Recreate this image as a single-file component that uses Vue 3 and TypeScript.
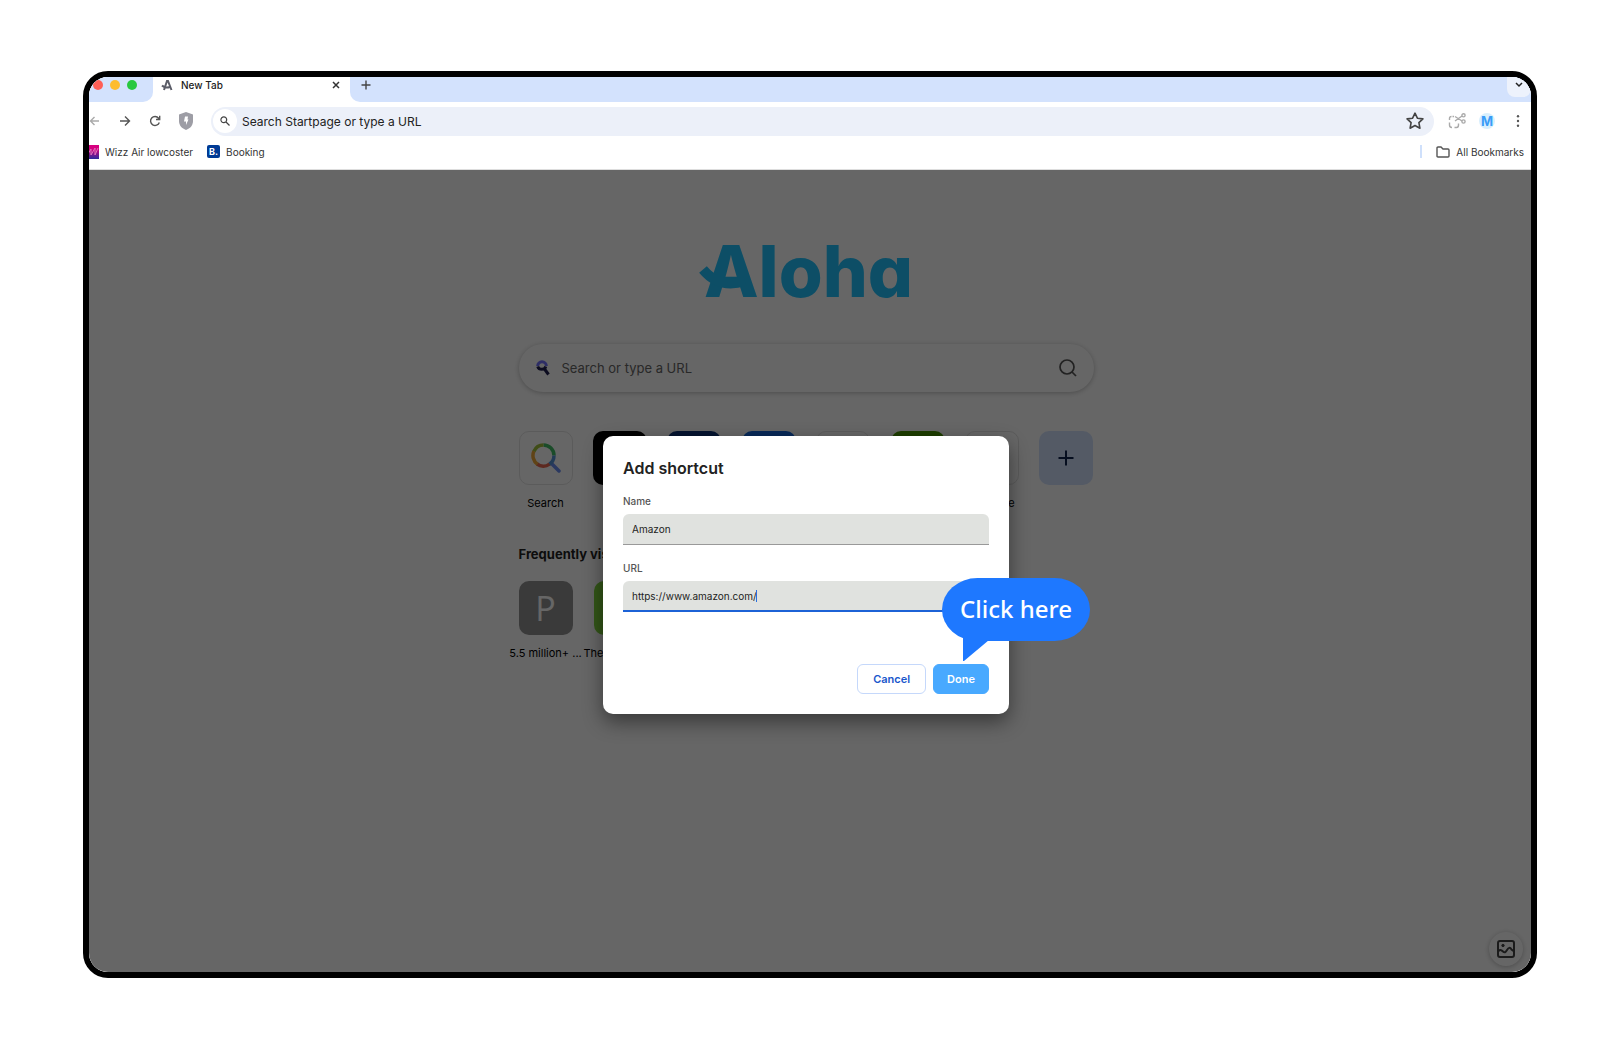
<script setup lang="ts">
import { ref } from 'vue'

interface Tile {
  label: string
  kind: string
}

const name = ref<string>('Amazon')
const url = ref<string>('https://www.amazon.com/')
const omnibox = ref<string>('')
const query = ref<string>('')

const shortcuts: Tile[] = [
  { label: 'Search', kind: 'search' },
  { label: '', kind: 'black' },
  { label: '', kind: 'navy' },
  { label: '', kind: 'blue' },
  { label: '', kind: 'plain' },
  { label: '', kind: 'green' },
  { label: 'YouTube', kind: 'video' },
  { label: '', kind: 'add' },
]
</script>

<template>
  <div class="stage">
    <div class="frame">
      <div class="screen">
        <header>
          <div class="tabstrip">
            <div class="lights"><i class="red"></i><i class="amber"></i><i class="lime"></i></div>
            <div class="tab">
              <svg width="12" height="12" viewBox="0 0 12 12" fill="none" stroke="#5b5d68" stroke-width="2">
                <path d="M3 11 6 2h1l3.500 9M1 6.500c2 2 5 2.500 8 1.500" />
              </svg>
              <span class="tab-title">New Tab</span>
              <button class="plain-btn" aria-label="Close tab">
                <svg width="8" height="8" viewBox="0 0 8 8" stroke="#333" stroke-width="1.500"><path d="M1 1l6 6M7 1 1 7" /></svg>
              </button>
            </div>
            <div class="strip-rest">
              <button class="plain-btn" aria-label="New tab">
                <svg width="10" height="10" viewBox="0 0 10 10" stroke="#444" stroke-width="1.400"><path d="M5 .5v9M.5 5h9" /></svg>
              </button>
              <button class="plain-btn tab-search" aria-label="Search tabs">
                <svg width="8" height="6" viewBox="0 0 8 6" fill="none" stroke="#222" stroke-width="1.500"><path d="M1 1l3 3 3-3" /></svg>
              </button>
            </div>
          </div>

          <div class="toolbar">
            <div class="nav">
              <button class="plain-btn" aria-label="Back">
                <svg width="12" height="12" viewBox="0 0 12 12" fill="none" stroke="#aaa" stroke-width="1.400"><path d="M10 6H1.500M5.500 2 1.500 6 5.500 10" /></svg>
              </button>
              <button class="plain-btn" aria-label="Forward">
                <svg width="12" height="12" viewBox="0 0 12 12" fill="none" stroke="#555" stroke-width="1.400"><path d="M1 6h9M6 1.500 10.500 6 6 10.500" /></svg>
              </button>
              <button class="plain-btn" aria-label="Reload">
                <svg width="12" height="12" viewBox="0 0 12 12" fill="none" stroke="#555" stroke-width="1.400"><path d="M10.300 7.500A4.500 4.500 0 1 1 9.600 3.200L10.500 4.300M10.700 .8v3.700H7" /></svg>
              </button>
              <button class="plain-btn" aria-label="Shield">
                <svg width="14" height="18" viewBox="0 0 14 18"><path d="M7 0 14 2.500V9c0 4.500-3 7.500-7 9-4-1.500-7-4.500-7-9V2.500z" fill="#9d9da5" /><path d="M6 4.500h3L8.500 7.500H9.500L7 13V9.500H5z" fill="#fff" /></svg>
              </button>
            </div>
            <div class="omnibox">
              <span class="omni-icon">
                <svg width="10" height="10" viewBox="0 0 10 10" fill="none" stroke="#444" stroke-width="1.200"><circle cx="3.800" cy="3.800" r="2.900" /><path d="M6 6l3.500 3.500" /></svg>
              </span>
              <input v-model="omnibox" type="text" placeholder="Search Startpage or type a URL" aria-label="Address" />
              <button class="plain-btn" aria-label="Bookmark this page">
                <svg width="18" height="18" viewBox="0 0 18 18" fill="none" stroke="#444" stroke-width="1.600" stroke-linejoin="round"><path d="M9 1.200l2.400 5 5.500.7-4 3.800 1 5.500L9 13.500l-4.900 2.700 1-5.500-4-3.800 5.500-.7z" /></svg>
              </button>
            </div>
            <div class="actions">
              <button class="plain-btn" aria-label="Capture">
                <svg width="18" height="16" viewBox="0 0 18 16" fill="none" stroke="#aaa" stroke-width="1.400"><path d="M6 3.500H4.500M3.500 3.500Q1.500 3.500 1.500 5.500V7M1.500 9.500V12Q1.500 14.500 4 14.500M6.500 14.500H8.500Q10.500 14.500 10.500 12V10.500M7 3.500l7 4.500M7 8l7-5" /><circle cx="15.500" cy="2.300" r="1.600" /><circle cx="15.500" cy="8.500" r="1.600" /></svg>
              </button>
              <button class="plain-btn avatar">M</button>
              <button class="plain-btn" aria-label="Menu">
                <svg width="4" height="14" viewBox="0 0 4 14" fill="#555"><circle cx="2" cy="2.300" r="1.200" /><circle cx="2" cy="7" r="1.200" /><circle cx="2" cy="11.700" r="1.200" /></svg>
              </button>
            </div>
          </div>

          <nav class="bookmarks">
            <a href="#">
              <svg width="14" height="14" viewBox="0 0 14 14">
                <defs><linearGradient id="wizz" x1="0" y1="0" x2="0" y2="1"><stop offset=".3" stop-color="#d6007f" /><stop offset="1" stop-color="#2a2a9c" /></linearGradient></defs>
                <rect width="14" height="14" fill="url(#wizz)" /><path d="M3 9 6 4v6l4-7v7l3-7" fill="none" stroke="#e070b8" />
              </svg>
              Wizz Air lowcoster
            </a>
            <a href="#"><span class="booking-icon">B.</span>Booking</a>
            <span class="bar"></span>
            <a href="#">
              <svg width="14" height="12" viewBox="0 0 14 12" fill="none" stroke="#555" stroke-width="1.400"><path d="M1 10V2q0-1 1-1h3l2 2h5q1 0 1 1v6q0 1-1 1H2q-1 0-1-1z" /></svg>
              All Bookmarks
            </a>
          </nav>
        </header>

        <main>
          <div class="content">
            <h1 class="logo">
              <svg class="swash" width="60" height="30" viewBox="0 0 60 30" fill="none" stroke="#21c4ff" stroke-width="10"><path d="M4 4.500C16 19 30 21 46 16" /></svg>
              Aloha
            </h1>

            <div class="searchbox">
              <svg width="14" height="16" viewBox="0 0 14 16" fill="none" stroke-width="3"><path d="M1.700 6.500a4.300 4.300 0 0 0 8.100 0" stroke="#202050" /><path d="M1.700 6a4.300 4.300 0 0 1 8.600 0" stroke="#7474ff" /><path d="M8.500 9l4 5.500" stroke="#202050" /></svg>
              <input v-model="query" type="text" placeholder="Search or type a URL" aria-label="Search" />
              <button class="plain-btn" aria-label="Search">
                <svg width="18" height="18" viewBox="0 0 18 18" fill="none" stroke="#555" stroke-width="1.700"><circle cx="8" cy="8" r="7" /><path d="M13 13l4 4" /></svg>
              </button>
            </div>

            <ul class="tiles">
              <li v-for="tile in shortcuts" :key="tile.kind">
                <span class="tile" :class="tile.kind">
                  <svg v-if="tile.kind === 'search'" width="30" height="30" viewBox="0 0 30 30" fill="none" stroke-width="3.500">
                    <path d="M20 20l8 8" stroke="#6a8cf0" stroke-linecap="round" />
                    <path d="M12.500 2A10.500 10.500 0 0 1 23 12.500" stroke="#43bd66" />
                    <path d="M23 12.500A10.500 10.500 0 0 1 18 21.500" stroke="#5595d8" />
                    <path d="M18.500 21.200A10.500 10.500 0 0 1 6 21" stroke="#e86850" />
                    <path d="M6.500 21.200A10.500 10.500 0 0 1 3 8" stroke="#f0a838" />
                    <path d="M3 8.200A10.500 10.500 0 0 1 12.500 2" stroke="#a0c03a" />
                  </svg>
                  <svg v-else-if="tile.kind === 'add'" width="16" height="16" viewBox="0 0 16 16" stroke="#10234f" stroke-width="2"><path d="M8 .5v15M.5 8h15" /></svg>
                  <svg v-else-if="tile.kind === 'video'" width="34" height="24" viewBox="0 0 34 24"><rect width="34" height="24" rx="6" fill="#f55" /></svg>
                </span>
                <span class="label">{{ tile.label }}</span>
              </li>
            </ul>

            <h2>Frequently visited</h2>
            <ul class="tiles visited">
              <li><span class="tile letter">P</span><span class="label">5.5 million+ ...</span></li>
              <li><span class="tile lime-tile"></span><span class="label start">The</span></li>
            </ul>
          </div>

          <button class="plain-btn customize" aria-label="Customize background">
            <svg width="18" height="18" viewBox="0 0 18 18" fill="none" stroke="#444" stroke-width="2"><rect x="1" y="1" width="16" height="16" rx="2" /><path d="M1.500 11c2-2 3-1 4.500.5s2.500 1 4-1.500 3-3 4.500-.5l2 1.500" /><circle cx="6" cy="5.500" r="1.200" fill="#444" stroke-width="1" /></svg>
          </button>

          <div class="overlay">
            <form class="dialog" role="dialog" aria-labelledby="dialog-title" @submit.prevent>
              <h3 id="dialog-title">Add shortcut</h3>
              <label for="shortcut-name">Name</label>
              <input id="shortcut-name" v-model="name" type="text" />
              <label for="shortcut-url">URL</label>
              <div class="field">
                <input id="shortcut-url" v-model="url" class="active" type="text" />
                <span class="caret"></span>
              </div>
              <div class="buttons">
                <button type="button" class="cancel">Cancel</button>
                <button type="submit" class="done">Done</button>
              </div>
              <div class="bubble">
                Click here
                <svg width="26" height="28" viewBox="0 0 26 28"><path d="M0 0H26V7L1 28H0z" fill="#1e78ff" /></svg>
              </div>
            </form>
          </div>
        </main>
      </div>
    </div>
  </div>
</template>

<style>
body {
  margin: 0;
  background: #fff;
}
</style>

<style scoped>
* {
  box-sizing: border-box;
}
.stage {
  min-height: 100vh;
  padding: 71px 84px 70px 83px;
  display: flex;
  font-family: Inter, "Liberation Sans", sans-serif;
  font-size: 11px;
  color: #222;
}
.frame {
  flex: 1;
  display: flex;
  min-width: 0;
  border: 6px solid #000;
  border-radius: 25px;
  overflow: hidden;
}
.screen {
  flex: 1;
  min-width: 0;
  margin: -9px 0 -8px -8px;
  display: flex;
  flex-direction: column;
}
svg {
  display: block;
  flex: none;
}
h1, h2, h3, ul {
  margin: 0;
  padding: 0;
}
input {
  font: inherit;
  color: inherit;
  border: 0;
  background: none;
  outline: 0;
  min-width: 0;
}
.plain-btn {
  border: 0;
  padding: 0;
  background: none;
  font: inherit;
  display: flex;
  align-items: center;
  justify-content: center;
}

.tabstrip {
  height: 34px;
  display: flex;
  background: #fff;
}
.lights {
  width: 72px;
  padding-left: 12px;
  display: flex;
  align-items: center;
  gap: 7px;
  background: #d3e2fd;
  border-bottom-right-radius: 10px;
}
.lights i {
  width: 10px;
  height: 10px;
  border-radius: 50%;
}
.red { background: #ff5f57; }
.amber { background: #febc2e; }
.lime { background: #28c840; }
.tab {
  width: 197px;
  padding: 0 10px 0 8px;
  display: flex;
  align-items: center;
  gap: 8px;
  font-size: 10px;
  font-weight: 500;
}
.tab-title {
  flex: 1;
}
.strip-rest {
  flex: 1;
  padding-left: 11px;
  display: flex;
  justify-content: space-between;
  background: #d3e2fd;
  border-bottom-left-radius: 10px;
}
.tab-search {
  width: 24px;
  height: 29px;
  padding-top: 4px;
  background: #edf2fc;
  border-radius: 8px;
}

.toolbar {
  height: 38px;
  padding: 0 11px 0 8px;
  display: flex;
  align-items: center;
  gap: 14px;
}
.nav {
  display: flex;
  align-items: center;
  gap: 18px;
  width: 108px;
}
.omnibox {
  flex: 1;
  height: 29px;
  padding: 0 10px 0 2px;
  display: flex;
  align-items: center;
  border-radius: 15px;
  background: #ecf0f9;
  font-size: 12px;
}
.omni-icon {
  width: 24px;
  height: 24px;
  display: grid;
  place-items: center;
  border-radius: 50%;
  background: #fff;
}
.omnibox input {
  flex: 1;
  padding: 0 5px;
}
.omnibox input::placeholder {
  color: #222;
  opacity: 1;
}
.actions {
  display: flex;
  align-items: center;
  gap: 13px;
}
.actions > :last-child {
  margin-left: 8px;
}
.avatar {
  width: 16px;
  height: 16px;
  border-radius: 50%;
  background: #d8effd;
  color: #399cf8;
  font-size: 13px;
  font-weight: 700;
}

.bookmarks {
  height: 30px;
  padding: 0 7px 6px 4px;
  border-bottom: 1px solid #ddd;
  display: flex;
  align-items: center;
  gap: 14px;
  font-size: 10px;
}
.bookmarks a {
  display: flex;
  align-items: center;
  gap: 6px;
  color: #333;
  text-decoration: none;
}
.booking-icon {
  width: 13px;
  height: 13px;
  border-radius: 2px;
  background: #003b95;
  color: #fff;
  font-weight: 700;
  font-size: 9px;
  line-height: 13px;
  text-align: center;
}
.bar {
  width: 2px;
  height: 13px;
  margin-left: auto;
  background: #cfe0fb;
}

main {
  flex: 1;
  position: relative;
  background: #fff;
}
.content {
  width: 575px;
  margin: 0 auto;
  padding-top: 61px;
}
.logo {
  position: relative;
  height: 80px;
  line-height: 80px;
  margin-bottom: 33px;
  padding-left: 5px;
  text-align: center;
  font-size: 71px;
  font-weight: 800;
  font-feature-settings: "cv11";
  color: #21c4ff;
}
.swash {
  position: absolute;
  left: 180px;
  top: 34px;
}
.searchbox {
  height: 48px;
  padding: 0 17px;
  display: flex;
  align-items: center;
  gap: 12px;
  border-radius: 24px;
  box-shadow: 0 1px 5px rgba(0, 0, 0, 0.25);
  font-size: 13px;
}
.searchbox input {
  flex: 1;
  padding: 0;
}
.searchbox input::placeholder {
  color: #666;
  opacity: 1;
}
.tiles {
  list-style: none;
  display: flex;
  justify-content: space-between;
  margin-top: 39px;
}
.tiles li {
  width: 54px;
  display: flex;
  flex-direction: column;
  align-items: center;
}
.tile {
  width: 54px;
  height: 54px;
  border-radius: 10px;
  display: grid;
  place-items: center;
}
.search, .plain, .video { border: 1px solid #e4e4e4; }
.black { background: #000; }
.navy { background: #0e3478; }
.blue { background: #1468dc; }
.green { background: #4a9a00; }
.add { background: #d3e2fd; }
.lime-tile { background: #7fd63c; }
.letter {
  background: #919191;
  color: #fff;
  font-family: "Open Sans", sans-serif;
  font-size: 34px;
  line-height: 54px;
}
.label {
  width: 74px;
  height: 16px;
  margin-top: 10px;
  line-height: 16px;
  text-align: center;
  white-space: nowrap;
  color: #000;
}
.start {
  text-align: left;
}
h2 {
  margin-top: 34px;
  font-size: 13px;
  line-height: 18px;
  font-weight: 700;
}
.visited {
  justify-content: flex-start;
  gap: 21px;
  margin-top: 18px;
}
.customize {
  position: absolute;
  right: 8px;
  bottom: 14px;
  width: 34px;
  height: 34px;
  border-radius: 50%;
  box-shadow: 0 1px 5px rgba(0, 0, 0, 0.25);
}

.overlay {
  position: absolute;
  inset: 0;
  display: grid;
  place-items: center;
  background: rgba(0, 0, 0, 0.6);
}
.dialog {
  position: relative;
  width: 406px;
  padding: 20px;
  display: flex;
  flex-direction: column;
  border-radius: 10px;
  background: #fff;
  box-shadow: 0 8px 20px rgba(0, 0, 0, 0.45);
}
h3 {
  font-size: 16px;
  line-height: 24px;
  font-weight: 600;
  margin-bottom: 14px;
}
label {
  font-size: 10px;
  line-height: 14px;
  font-weight: 500;
  color: #555;
  margin-bottom: 6px;
}
.dialog input {
  width: 100%;
  height: 31px;
  padding: 0 9px;
  border-bottom: 1px solid #999;
  border-radius: 6px 6px 0 0;
  background: #e0e2df;
  font-size: 10px;
}
.dialog > input {
  margin-bottom: 16px;
}
.dialog .active {
  border-bottom: 2px solid #1c62d6;
}
.field {
  position: relative;
}
.caret {
  position: absolute;
  left: 133px;
  top: 9px;
  width: 1px;
  height: 12px;
  background: #2b6fe0;
}
.buttons {
  display: flex;
  justify-content: flex-end;
  gap: 7px;
  margin-top: 52px;
}
.buttons button {
  height: 30px;
  padding: 0 13px;
  border: 1px solid #c5d8fb;
  border-radius: 6px;
  background: #fff;
  color: #1a57cc;
  font: 600 11px Inter, sans-serif;
}
.buttons .cancel {
  padding: 0 15px;
}
.buttons .done {
  border-color: #48a9ff;
  background: #48a9ff;
  color: #fff;
}
.bubble {
  position: absolute;
  left: 339px;
  top: 142px;
  width: 148px;
  height: 63px;
  border-radius: 36px / 32px;
  background: #1e78ff;
  color: #fff;
  font: 500 24px/62px "Noto Sans", sans-serif;
  text-align: center;
}
.bubble svg {
  position: absolute;
  left: 21px;
  top: 55px;
}
</style>
